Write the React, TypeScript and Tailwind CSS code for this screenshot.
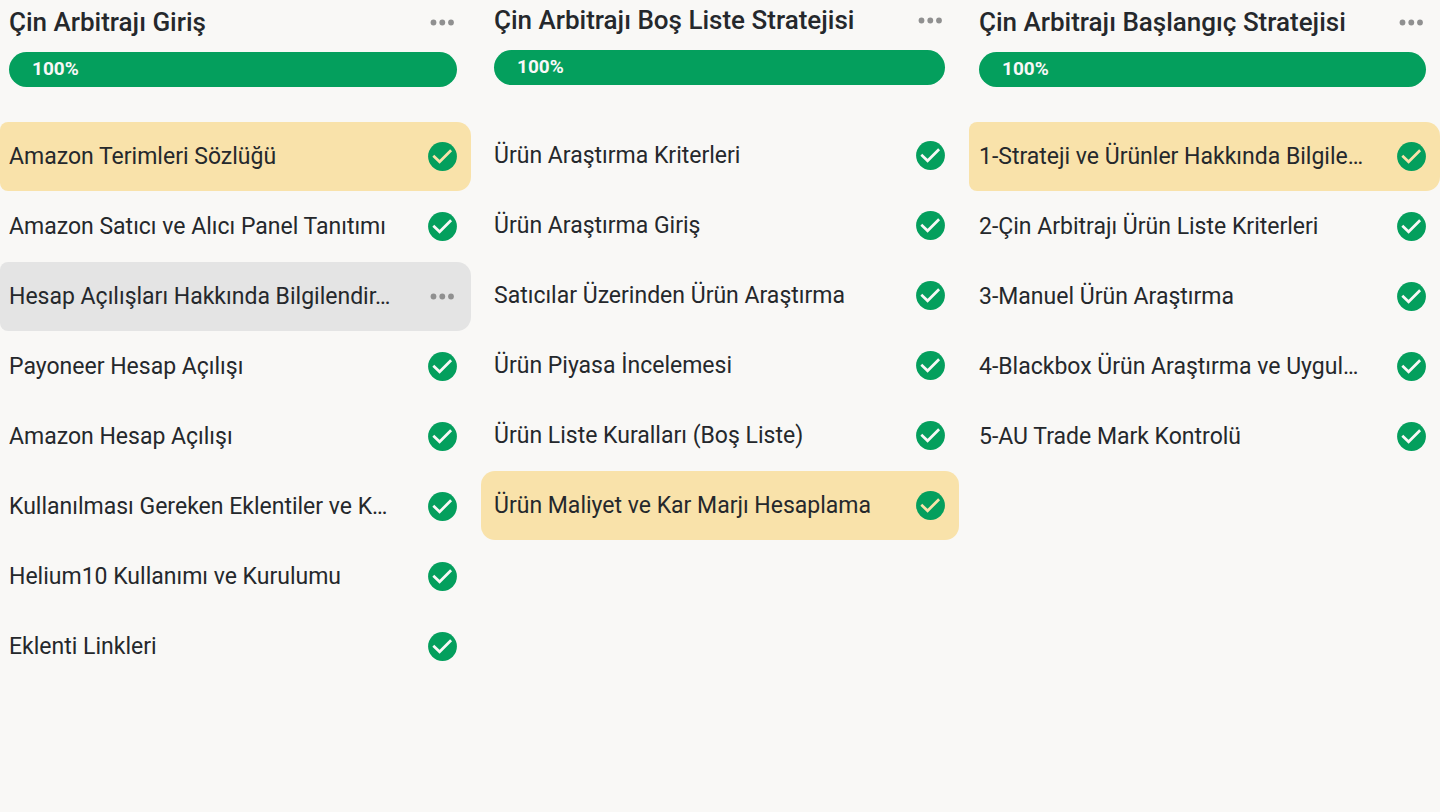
import React from "react";

type Lesson = { title: string; tone?: "amber" | "gray" };
type Course = { title: string; lessons: Lesson[]; column: string; pad: string; card: string; heading: string; list: string };

const courses: Course[] = [
  {
    title: "Çin Arbitrajı Giriş",
    column: "basis-[471px]",
    pad: "pl-[9px] pr-[14px]",
    card: "rounded-r-[14px] rounded-l-lg",
    heading: "pt-[7px]",
    list: "mt-[35px]",
    lessons: [
      { title: "Amazon Terimleri Sözlüğü", tone: "amber" },
      { title: "Amazon Satıcı ve Alıcı Panel Tanıtımı" },
      { title: "Hesap Açılışları Hakkında Bilgilendir…", tone: "gray" },
      { title: "Payoneer Hesap Açılışı" },
      { title: "Amazon Hesap Açılışı" },
      { title: "Kullanılması Gereken Eklentiler ve K…" },
      { title: "Helium10 Kullanımı ve Kurulumu" },
      { title: "Eklenti Linkleri" },
    ],
  },
  {
    title: "Çin Arbitrajı Boş Liste Stratejisi",
    column: "basis-[478px]",
    pad: "pl-[13px] pr-[14px]",
    card: "rounded-[14px]",
    heading: "pt-[5px]",
    list: "mt-9",
    lessons: [
      { title: "Ürün Araştırma Kriterleri" },
      { title: "Ürün Araştırma Giriş" },
      { title: "Satıcılar Üzerinden Ürün Araştırma" },
      { title: "Ürün Piyasa İncelemesi" },
      { title: "Ürün Liste Kuralları (Boş Liste)" },
      { title: "Ürün Maliyet ve Kar Marjı Hesaplama", tone: "amber" },
    ],
  },
  {
    title: "Çin Arbitrajı Başlangıç Stratejisi",
    column: "basis-[471px]",
    pad: "pl-[10px] pr-[14px]",
    card: "rounded-r-[14px] rounded-l-lg",
    heading: "pt-[7px]",
    list: "mt-[35px]",
    lessons: [
      { title: "1-Strateji ve Ürünler Hakkında Bilgile…", tone: "amber" },
      { title: "2-Çin Arbitrajı Ürün Liste Kriterleri" },
      { title: "3-Manuel Ürün Araştırma" },
      { title: "4-Blackbox Ürün Araştırma ve Uygul…" },
      { title: "5-AU Trade Mark Kontrolü" },
    ],
  },
];

const tones = { amber: "bg-[#f9e2aa]", gray: "bg-[#e4e4e4]" };

function MoreButton({ label }: { label: string }) {
  return (
    <button type="button" aria-label={label} className="flex h-[31px] w-[29px] shrink-0 items-center justify-center text-[#909090]">
      <svg viewBox="0 0 25 7" className="h-[7px] w-[25px]" fill="currentColor" aria-hidden="true">
        <circle cx="3.5" cy="3.5" r="2.9" />
        <circle cx="12.3" cy="3.5" r="2.9" />
        <circle cx="21" cy="3.5" r="2.9" />
      </svg>
    </button>
  );
}

function DoneIcon({ tick }: { tick: string }) {
  return (
    <svg viewBox="0 0 29 29" className={`size-[29px] shrink-0 ${tick}`} fill="none" role="img" aria-label="Tamamlandı">
      <circle cx="14.5" cy="14.5" r="14.4" fill="#049f5d" />
      <path d="M5.3 13.8l6.3 6L23.1 8.3" stroke="currentColor" strokeWidth="2.7" />
    </svg>
  );
}

function CourseColumn({ course }: { course: Course }) {
  return (
    <section className={`min-w-0 grow ${course.column} ${course.heading}`}>
      <header className={course.pad}>
        <div className="flex h-[31px] items-center justify-between">
          <h2 className="truncate text-[26px] leading-[31px] font-medium">{course.title}</h2>
          <MoreButton label={`${course.title} menüsü`} />
        </div>
        <div
          role="progressbar"
          aria-label={course.title}
          aria-valuenow={100}
          className="mt-3.5 flex h-[35px] items-center rounded-full bg-[#049f5d] pb-0.5 pl-[23px] text-[19px] leading-6 font-bold text-[#f9f8f7]"
        >
          100%
        </div>
      </header>
      <ul className={`flex flex-col gap-px ${course.list}`}>
        {course.lessons.map((lesson) => (
          <li
            key={lesson.title}
            className={`flex h-[69px] items-center justify-between gap-4 ${course.pad} ${course.card} ${lesson.tone ? tones[lesson.tone] : ""}`}
          >
            <a href="#" className="min-w-0 truncate text-[23px] leading-8">
              {lesson.title}
            </a>
            {lesson.tone === "gray" ? (
              <MoreButton label={`${lesson.title} menüsü`} />
            ) : (
              <DoneIcon tick={lesson.tone === "amber" ? "text-[#f9e2aa]" : "text-[#f9f8f7]"} />
            )}
          </li>
        ))}
      </ul>
    </section>
  );
}

export default function App() {
  return (
    <main className="flex min-h-screen gap-2.5 bg-[#f9f8f6] font-['Roboto',sans-serif] text-[#25282c]">
      {courses.map((course) => (
        <CourseColumn key={course.title} course={course} />
      ))}
    </main>
  );
}
